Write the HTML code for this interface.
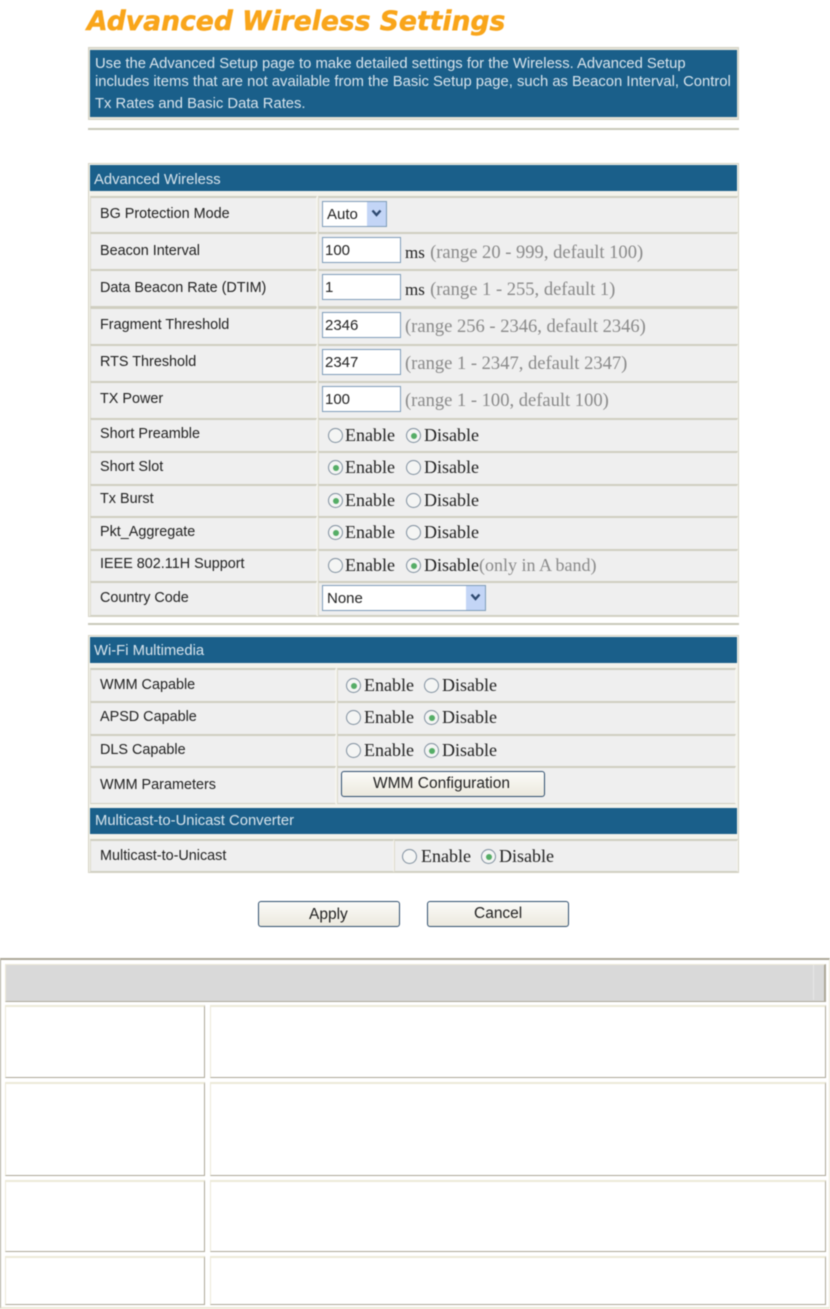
<!DOCTYPE html>
<html><head><meta charset="utf-8"><title>Advanced Wireless Settings</title>
<style>
html,body{margin:0;padding:0;background:#fff}
#p{position:relative;width:830px;height:1309px;overflow:hidden;background:#fff;filter:blur(.4px)}
#p div,#p span.t,#p svg{position:absolute;box-sizing:border-box}
.t{position:absolute;white-space:nowrap;line-height:20px;height:20px;margin-top:1px;font-family:"Liberation Sans",sans-serif;font-size:14.4px;color:#222}
.w{color:#d8e4ec;font-size:14.8px}
.s{font-family:"Liberation Serif",serif;font-size:18.55px;color:#8a8a8a}
.e{font-family:"Liberation Serif",serif;font-size:18px;color:#222}
.t.s,.t.e{margin-top:0}
.f{background:#e4e2d6;border:1px solid #d4d2c4}
.b{background:#1a5f8a}
.c{background:#efefef;border-top:2px solid #cfcec0;border-left:1px solid #dcdacd;border-right:1px solid #f7f6f0;border-bottom:1px solid #cfcec0}
.i{background:#fff;border:1px solid #7f9db9}
.sel{background:#fff;border:1px solid #7f9db9}
.ar{background:#c3d5f6}
.o{width:15px;height:15px;border-radius:50%;background:#f4f5f4;border:1px solid #7f8f9e}
.o.k::after{content:"";position:absolute;left:3.5px;top:3.5px;width:6px;height:6px;border-radius:50%;background:#55ad66}
.btn{background:linear-gradient(#fbfbf8,#ece9de);border:1px solid #2f4f6f;border-radius:3px}
.ln{background:#c9c8ba;height:2px}
.g{background:#fff;border-top:2px solid #ece9d8;border-left:1px solid #ece9d8;border-right:1px solid #aca899;border-bottom:1px solid #aca899}
.n{font-size:15px}
.bt{font-size:15.5px}
</style></head><body><div id="p">

<span class="t" style="left:87px;top:5px;height:32px;line-height:32px;font-family:'DejaVu Sans',sans-serif;font-weight:bold;font-style:italic;font-size:26.6px;color:#f9a51a;-webkit-text-stroke:.5px #f9a51a">Advanced Wireless Settings</span>

<div class="f" style="left:88px;top:47px;width:651px;height:73px"></div>
<div class="b" style="left:90px;top:50px;width:647px;height:67px"></div>
<span class="t w" style="left:95px;top:53px">Use the Advanced Setup page to make detailed settings for the Wireless. Advanced Setup</span>
<span class="t w" style="left:95px;top:71px">includes items that are not available from the Basic Setup page, such as Beacon Interval, Control</span>
<span class="t w" style="left:95px;top:93px">Tx Rates and Basic Data Rates.</span>
<div class="ln" style="left:88px;top:128px;width:651px"></div>

<div class="f" style="left:88px;top:163px;width:651px;height:454px;background:#f4f3ec"></div>
<div class="b" style="left:90px;top:165px;width:647px;height:26px"></div>
<span class="t w" style="left:94px;top:169px">Advanced Wireless</span>

<div class="c" style="left:90px;top:196px;width:227px;height:37px"></div><div class="c" style="left:318px;top:196px;width:420px;height:37px"></div>
<div class="c" style="left:90px;top:232px;width:227px;height:38px"></div><div class="c" style="left:318px;top:232px;width:420px;height:38px"></div>
<div class="c" style="left:90px;top:269px;width:227px;height:38px"></div><div class="c" style="left:318px;top:269px;width:420px;height:38px"></div>
<div class="c" style="left:90px;top:307px;width:227px;height:38px"></div><div class="c" style="left:318px;top:307px;width:420px;height:38px"></div>
<div class="c" style="left:90px;top:344px;width:227px;height:38px"></div><div class="c" style="left:318px;top:344px;width:420px;height:38px"></div>
<div class="c" style="left:90px;top:381px;width:227px;height:38px"></div><div class="c" style="left:318px;top:381px;width:420px;height:38px"></div>
<div class="c" style="left:90px;top:418px;width:227px;height:34px"></div><div class="c" style="left:318px;top:418px;width:420px;height:34px"></div>
<div class="c" style="left:90px;top:451px;width:227px;height:34px"></div><div class="c" style="left:318px;top:451px;width:420px;height:34px"></div>
<div class="c" style="left:90px;top:484px;width:227px;height:33px"></div><div class="c" style="left:318px;top:484px;width:420px;height:33px"></div>
<div class="c" style="left:90px;top:516px;width:227px;height:34px"></div><div class="c" style="left:318px;top:516px;width:420px;height:34px"></div>
<div class="c" style="left:90px;top:549px;width:227px;height:33px"></div><div class="c" style="left:318px;top:549px;width:420px;height:33px"></div>
<div class="c" style="left:90px;top:581px;width:227px;height:35px"></div><div class="c" style="left:318px;top:581px;width:420px;height:35px"></div>

<span class="t" style="left:100px;top:203px">BG Protection Mode</span>
<span class="t" style="left:100px;top:240px">Beacon Interval</span>
<span class="t" style="left:100px;top:277px">Data Beacon Rate (DTIM)</span>
<span class="t" style="left:100px;top:314px">Fragment Threshold</span>
<span class="t" style="left:100px;top:351px">RTS Threshold</span>
<span class="t" style="left:100px;top:388px">TX Power</span>
<span class="t" style="left:100px;top:423px">Short Preamble</span>
<span class="t" style="left:100px;top:456px">Short Slot</span>
<span class="t" style="left:100px;top:488px">Tx Burst</span>
<span class="t" style="left:100px;top:521px">Pkt_Aggregate</span>
<span class="t" style="left:100px;top:553px">IEEE 802.11H Support</span>
<span class="t" style="left:100px;top:587px">Country Code</span>

<div class="sel" style="left:322px;top:201px;width:65px;height:26px"></div>
<div class="ar" style="left:367px;top:202px;width:19px;height:24px"></div>
<svg style="left:371px;top:209px" width="11" height="9" viewBox="0 0 11 9"><path d="M1.5 1.5L5.5 6L9.5 1.5" fill="none" stroke="#2f4a70" stroke-width="2.4"/></svg>
<span class="t n" style="left:327px;top:204px">Auto</span>

<div class="i" style="left:322px;top:237px;width:79px;height:26px"></div><span class="t n" style="left:325px;top:240px">100</span>
<div class="i" style="left:322px;top:274px;width:79px;height:26px"></div><span class="t n" style="left:325px;top:277px">1</span>
<div class="i" style="left:322px;top:312px;width:79px;height:26px"></div><span class="t n" style="left:325px;top:315px">2346</span>
<div class="i" style="left:322px;top:349px;width:79px;height:26px"></div><span class="t n" style="left:325px;top:352px">2347</span>
<div class="i" style="left:322px;top:386px;width:79px;height:26px"></div><span class="t n" style="left:325px;top:389px">100</span>

<span class="t e" style="left:405px;top:243px;font-size:17px">ms <span class="s" style="margin-left:1px">(range 20 - 999, default 100)</span></span>
<span class="t e" style="left:405px;top:280px;font-size:17px">ms <span class="s" style="margin-left:1px">(range 1 - 255, default 1)</span></span>
<span class="t s" style="left:405px;top:317px">(range 256 - 2346, default 2346)</span>
<span class="t s" style="left:405px;top:354px">(range 1 - 2347, default 2347)</span>
<span class="t s" style="left:405px;top:391px">(range 1 - 100, default 100)</span>

<div class="o" style="left:328px;top:428px"></div><span class="t e" style="left:345px;top:425px">Enable</span><div class="o k" style="left:406px;top:428px"></div><span class="t e" style="left:424px;top:425px">Disable</span>
<div class="o k" style="left:328px;top:460px"></div><span class="t e" style="left:345px;top:457px">Enable</span><div class="o" style="left:406px;top:460px"></div><span class="t e" style="left:424px;top:457px">Disable</span>
<div class="o k" style="left:328px;top:493px"></div><span class="t e" style="left:345px;top:490px">Enable</span><div class="o" style="left:406px;top:493px"></div><span class="t e" style="left:424px;top:490px">Disable</span>
<div class="o k" style="left:328px;top:525px"></div><span class="t e" style="left:345px;top:522px">Enable</span><div class="o" style="left:406px;top:525px"></div><span class="t e" style="left:424px;top:522px">Disable</span>
<div class="o" style="left:328px;top:558px"></div><span class="t e" style="left:345px;top:555px">Enable</span><div class="o k" style="left:406px;top:558px"></div><span class="t e" style="left:424px;top:555px">Disable<span class="s" style="font-size:18px">(only in A band)</span></span>

<div class="sel" style="left:322px;top:585px;width:164px;height:26px"></div>
<div class="ar" style="left:466px;top:586px;width:19px;height:24px"></div>
<svg style="left:470px;top:593px" width="11" height="9" viewBox="0 0 11 9"><path d="M1.5 1.5L5.5 6L9.5 1.5" fill="none" stroke="#2f4a70" stroke-width="2.4"/></svg>
<span class="t n" style="left:327px;top:588px">None</span>

<div class="ln" style="left:88px;top:623px;width:651px"></div>

<div class="f" style="left:88px;top:635px;width:651px;height:238px;background:#f4f3ec"></div>
<div class="b" style="left:90px;top:637px;width:647px;height:26px"></div>
<span class="t w" style="left:94px;top:640px">Wi-Fi Multimedia</span>

<div class="c" style="left:90px;top:668px;width:246px;height:34px"></div><div class="c" style="left:337px;top:668px;width:399px;height:34px"></div>
<div class="c" style="left:90px;top:701px;width:246px;height:34px"></div><div class="c" style="left:337px;top:701px;width:399px;height:34px"></div>
<div class="c" style="left:90px;top:734px;width:246px;height:33px"></div><div class="c" style="left:337px;top:734px;width:399px;height:33px"></div>
<div class="c" style="left:90px;top:766px;width:246px;height:38px"></div><div class="c" style="left:337px;top:766px;width:399px;height:38px"></div>

<span class="t" style="left:100px;top:674px">WMM Capable</span>
<span class="t" style="left:100px;top:706px">APSD Capable</span>
<span class="t" style="left:100px;top:739px">DLS Capable</span>
<span class="t" style="left:100px;top:774px">WMM Parameters</span>

<div class="o k" style="left:346px;top:678px"></div><span class="t e" style="left:364px;top:675px">Enable</span><div class="o" style="left:424px;top:678px"></div><span class="t e" style="left:442px;top:675px">Disable</span>
<div class="o" style="left:346px;top:710px"></div><span class="t e" style="left:364px;top:707px">Enable</span><div class="o k" style="left:424px;top:710px"></div><span class="t e" style="left:442px;top:707px">Disable</span>
<div class="o" style="left:346px;top:743px"></div><span class="t e" style="left:364px;top:740px">Enable</span><div class="o k" style="left:424px;top:743px"></div><span class="t e" style="left:442px;top:740px">Disable</span>

<div class="btn" style="left:341px;top:771px;width:204px;height:26px"></div>
<span class="t bt" style="left:373px;top:773px">WMM Configuration</span>

<div class="b" style="left:90px;top:808px;width:647px;height:26px"></div>
<span class="t w" style="left:95px;top:810px">Multicast-to-Unicast Converter</span>

<div class="c" style="left:90px;top:839px;width:304px;height:33px"></div><div class="c" style="left:394px;top:839px;width:344px;height:33px"></div>
<span class="t" style="left:100px;top:845px">Multicast-to-Unicast</span>
<div class="o" style="left:402px;top:849px"></div><span class="t e" style="left:421px;top:846px">Enable</span><div class="o k" style="left:481px;top:849px"></div><span class="t e" style="left:499px;top:846px">Disable</span>

<div class="btn" style="left:258px;top:901px;width:142px;height:26px"></div>
<span class="t bt" style="left:309px;top:904px">Apply</span>
<div class="btn" style="left:427px;top:901px;width:142px;height:26px"></div>
<span class="t bt" style="left:474px;top:903px">Cancel</span>

<div style="left:0;top:958px;width:830px;height:351px;border-top:2px solid #aca899;border-left:1px solid #aca899;border-right:1px solid #ece9d8;border-bottom:2px solid #ece9d8;background:#fff"></div>
<div style="left:5px;top:964px;width:821px;height:38px;background:#d9d9d9;border-top:1px solid #ece9d8;border-left:1px solid #ece9d8;border-right:2px solid #aca899;border-bottom:1px solid #aca899"></div>
<div style="left:813px;top:965px;width:1px;height:35px;background:#e6e6e6"></div>

<div class="g" style="left:5px;top:1005px;width:200px;height:73px"></div><div class="g" style="left:210px;top:1005px;width:616px;height:73px"></div>
<div class="g" style="left:5px;top:1082px;width:200px;height:94px"></div><div class="g" style="left:210px;top:1082px;width:616px;height:94px"></div>
<div class="g" style="left:5px;top:1180px;width:200px;height:72px"></div><div class="g" style="left:210px;top:1180px;width:616px;height:72px"></div>
<div class="g" style="left:5px;top:1256px;width:200px;height:49px"></div><div class="g" style="left:210px;top:1256px;width:616px;height:49px"></div>

</div></body></html>
